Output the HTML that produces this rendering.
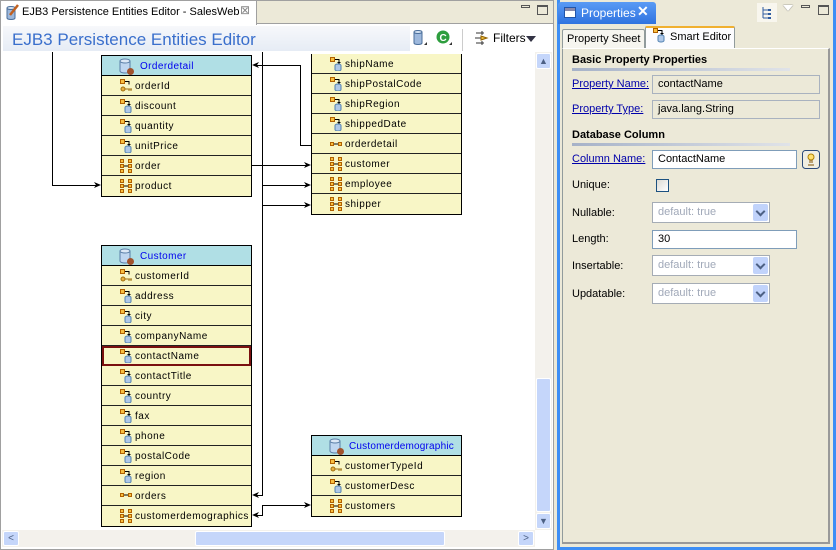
<!DOCTYPE html>
<html><head><meta charset="utf-8"><style>
*{margin:0;padding:0;box-sizing:border-box}
body{width:836px;height:550px;background:#ECE9D8;position:relative;overflow:hidden;font-family:"Liberation Sans",sans-serif;font-size:11px;color:#000}
.a{position:absolute}
.box{position:absolute;width:151px;border:1px solid #000;background:#F8F6C6}
.hd{height:20px;background:#B0DFE5;border-bottom:1px solid #000;position:relative;color:#0000EE;font-size:10px;letter-spacing:.4px;line-height:21px}
.r{height:20px;border-bottom:1px solid #222;position:relative;font-size:10px;letter-spacing:.5px;line-height:22px;padding-left:33px}
.r:last-child{border-bottom:0}
.ic{position:absolute;left:18px;top:3px;width:13px;height:14px}
.ent{position:absolute;left:16px;top:2px;width:17px;height:18px}
.lbl{position:absolute;font-size:11px}
.lnk{color:#0000AA;text-decoration:underline}
.fld{position:absolute;border:1px solid #7F9DB9;background:#fff;height:19px;line-height:17px;padding-left:5px;font-size:11px}
.combo{position:absolute;border:1px solid #A5ACB5;background:#fff;height:21px;line-height:19px;padding-left:5px;color:#A0A8B8;font-size:11px;width:118px}
.combo b{position:absolute;right:1px;top:1px;width:15px;height:17px;background:#C1D3FB;border-radius:2px}
.combo b:after{content:"";position:absolute;left:4px;top:4px;width:5px;height:5px;border-right:2px solid #4D6185;border-bottom:2px solid #4D6185;transform:rotate(45deg)}
.ln{position:absolute;background:#000}
</style></head><body>
<svg width="0" height="0" style="position:absolute"><defs>
<g id="col"><rect x="0.5" y="0.5" width="4" height="4" fill="#F8C040" stroke="#B06000"/><path d="M5 2.5h4v3" stroke="#000" fill="none"/><path d="M7 5l2 2l2-2" fill="#000"/><ellipse cx="8" cy="8.5" rx="3" ry="1.5" fill="#AFC8E8" stroke="#5080B0"/><path d="M5 8.5v4a3 1.5 0 0 0 6 0v-4" fill="#AFC8E8" stroke="#5080B0"/></g>
<g id="key"><rect x="0.5" y="0.5" width="4" height="4" fill="#F8C040" stroke="#B06000"/><path d="M5 2.5h4v3" stroke="#000" fill="none"/><circle cx="3" cy="10" r="2" fill="#E8B040" stroke="#A07010"/><path d="M5 10h7M9 10v2M11 10v2" stroke="#A07010"/></g>
<g id="rel"><rect x="0.5" y="4.5" width="3" height="3" fill="#F8C040" stroke="#B06000"/><path d="M4 6h4" stroke="#000"/><rect x="8.5" y="4.5" width="3" height="3" fill="#F8C040" stroke="#B06000"/></g>
<g id="rel2"><rect x="0.5" y="0.5" width="3" height="3" fill="#F8C040" stroke="#B06000"/><rect x="0.5" y="5.5" width="3" height="3" fill="#F8C040" stroke="#B06000"/><rect x="0.5" y="10.5" width="3" height="3" fill="#F8C040" stroke="#B06000"/><path d="M4 7h4" stroke="#000"/><rect x="8.5" y="0.5" width="3" height="3" fill="#F8C040" stroke="#B06000"/><rect x="8.5" y="5.5" width="3" height="3" fill="#F8C040" stroke="#B06000"/><rect x="8.5" y="10.5" width="3" height="3" fill="#F8C040" stroke="#B06000"/></g>
<g id="ent"><path d="M2 3v10a5 2 0 0 0 10 0v-10" fill="#BFD6F0" stroke="#5A7FA8"/><ellipse cx="7" cy="3" rx="5" ry="2" fill="#DDE9F7" stroke="#5A7FA8"/><circle cx="12.5" cy="13.5" r="3.5" fill="#A0522D"/></g>
</defs></svg>

<!-- LEFT EDITOR -->
<div class="a" style="left:0;top:0;width:554px;height:550px;border:1px solid #A0A0A0;background:#fff"></div>
<div class="a" style="left:1px;top:1px;width:552px;height:23px;background:#ECE9D8;border-bottom:1px solid #A0A0A0"></div>
<div class="a" style="left:1px;top:1px;width:256px;height:24px;background:#fff;border-right:1px solid #A0A0A0"></div>
<svg class="a" style="left:4px;top:4px" width="16" height="16"><path d="M3 4v10a4 1.5 0 0 0 8 0v-10" fill="#9DB8DC" stroke="#4A6E9A"/><ellipse cx="7" cy="4" rx="4" ry="1.5" fill="#D5E3F3" stroke="#4A6E9A"/><path d="M14 1l-8 10" stroke="#C06020" stroke-width="2.5"/></svg>
<div class="a" style="left:22px;top:6px;font-size:11px">EJB3 Persistence Entities Editor - SalesWeb</div>
<div class="a" style="left:240px;top:3px;font-size:12px;color:#888">⊠</div>
<div class="a" style="left:521px;top:5px;width:9px;height:3px;border:1px solid #555"></div>
<div class="a" style="left:537px;top:5px;width:11px;height:10px;border:1px solid #555;border-top-width:2px"></div>
<div class="a" style="left:3px;top:26px;width:407px;height:25px;background:linear-gradient(#F7F8FB,#E6ECF5)"></div>
<div class="a" style="left:12px;top:30px;font-size:17px;color:#3A6FCC">EJB3 Persistence Entities Editor</div>
<svg class="a" style="left:412px;top:29px" width="20" height="18"><path d="M2 3v11a4 1.5 0 0 0 8 0v-11" fill="#9DB8DC" stroke="#4A6E9A"/><ellipse cx="6" cy="3" rx="4" ry="1.5" fill="#D5E3F3" stroke="#4A6E9A"/><path d="M12 16l3-3v3z" fill="#333"/></svg>
<svg class="a" style="left:435px;top:29px" width="20" height="18"><circle cx="8" cy="8" r="6.5" fill="#2E9E3E"/><text x="4.5" y="12" font-size="10" font-weight="bold" fill="#fff" font-family="Liberation Sans">C</text><path d="M14 16l3-3v3z" fill="#333"/></svg>
<div class="a" style="left:462px;top:29px;width:1px;height:22px;background:#ccc"></div>
<svg class="a" style="left:473px;top:30px" width="18" height="16"><path d="M3 3h8M9 1v4M3 13h8M9 11v4M2 8h9" stroke="#333"/><path d="M8 6l6 2l-6 2z" fill="#F0C040" stroke="#906000"/></svg>
<div class="a" style="left:493px;top:31px;font-size:12px">Filters</div>
<div class="a" style="left:526px;top:36px;width:0;height:0;border-left:5px solid transparent;border-right:5px solid transparent;border-top:6px solid #334"></div>

<!-- lines -->
<div class="ln" style="left:52px;top:52px;width:1px;height:134px"></div>
<div class="ln" style="left:52px;top:185px;width:46px;height:1px"></div>
<div class="ln" style="left:262px;top:52px;width:1px;height:444px"></div>
<div class="ln" style="left:252px;top:165px;width:56px;height:1px"></div>
<div class="ln" style="left:262px;top:185px;width:46px;height:1px"></div>
<div class="ln" style="left:262px;top:205px;width:46px;height:1px"></div>
<div class="ln" style="left:300px;top:65px;width:1px;height:81px"></div>
<div class="ln" style="left:255px;top:65px;width:46px;height:1px"></div>
<div class="ln" style="left:300px;top:145px;width:11px;height:1px"></div>
<div class="ln" style="left:255px;top:495px;width:8px;height:1px"></div>
<div class="ln" style="left:262px;top:505px;width:46px;height:1px"></div>
<div class="ln" style="left:262px;top:505px;width:1px;height:11px"></div>
<div class="ln" style="left:255px;top:515px;width:8px;height:1px"></div>
<svg class="a" style="left:0;top:0" width="554" height="550">
<g fill="#000"><path d="M101 185l-7-3l2 3l-2 3z"/><path d="M311 165l-7-3l2 3l-2 3z"/><path d="M311 185l-7-3l2 3l-2 3z"/><path d="M311 205l-7-3l2 3l-2 3z"/><path d="M311 505l-7-3l2 3l-2 3z"/><path d="M252 65l7-3l-2 3l2 3z"/><path d="M252 495l7-3l-2 3l2 3z"/><path d="M252 515l7-3l-2 3l2 3z"/></g></svg>

<!-- Orderdetail -->
<div class="box" style="left:101px;top:55px">
<div class="hd"><svg class="ent"><use href="#ent"/></svg><span style="position:absolute;left:38px">Orderdetail</span></div>
<div class="r"><svg class="ic"><use href="#key"/></svg>orderId</div>
<div class="r"><svg class="ic"><use href="#col"/></svg>discount</div>
<div class="r"><svg class="ic"><use href="#col"/></svg>quantity</div>
<div class="r"><svg class="ic"><use href="#col"/></svg>unitPrice</div>
<div class="r"><svg class="ic"><use href="#rel2"/></svg>order</div>
<div class="r"><svg class="ic"><use href="#rel2"/></svg>product</div>
</div>

<!-- Orders (partial) -->
<div class="box" style="left:311px;top:54px;border-top:0">
<div class="r"><svg class="ic"><use href="#col"/></svg>shipName</div>
<div class="r"><svg class="ic"><use href="#col"/></svg>shipPostalCode</div>
<div class="r"><svg class="ic"><use href="#col"/></svg>shipRegion</div>
<div class="r"><svg class="ic"><use href="#col"/></svg>shippedDate</div>
<div class="r"><svg class="ic" style="top:4px"><use href="#rel"/></svg>orderdetail</div>
<div class="r"><svg class="ic"><use href="#rel2"/></svg>customer</div>
<div class="r"><svg class="ic"><use href="#rel2"/></svg>employee</div>
<div class="r"><svg class="ic"><use href="#rel2"/></svg>shipper</div>
</div>

<!-- Customer -->
<div class="box" style="left:101px;top:245px">
<div class="hd"><svg class="ent"><use href="#ent"/></svg><span style="position:absolute;left:38px">Customer</span></div>
<div class="r"><svg class="ic"><use href="#key"/></svg>customerId</div>
<div class="r"><svg class="ic"><use href="#col"/></svg>address</div>
<div class="r"><svg class="ic"><use href="#col"/></svg>city</div>
<div class="r"><svg class="ic"><use href="#col"/></svg>companyName</div>
<div class="r" style="outline:2px solid #7A1010;outline-offset:-2px"><svg class="ic"><use href="#col"/></svg>contactName</div>
<div class="r"><svg class="ic"><use href="#col"/></svg>contactTitle</div>
<div class="r"><svg class="ic"><use href="#col"/></svg>country</div>
<div class="r"><svg class="ic"><use href="#col"/></svg>fax</div>
<div class="r"><svg class="ic"><use href="#col"/></svg>phone</div>
<div class="r"><svg class="ic"><use href="#col"/></svg>postalCode</div>
<div class="r"><svg class="ic"><use href="#col"/></svg>region</div>
<div class="r"><svg class="ic"><use href="#rel"/></svg>orders</div>
<div class="r"><svg class="ic"><use href="#rel2"/></svg>customerdemographics</div>
</div>

<!-- Customerdemographic -->
<div class="box" style="left:311px;top:435px">
<div class="hd"><svg class="ent"><use href="#ent"/></svg><span style="position:absolute;left:37px;letter-spacing:.2px">Customerdemographic</span></div>
<div class="r"><svg class="ic"><use href="#key"/></svg>customerTypeId</div>
<div class="r"><svg class="ic"><use href="#col"/></svg>customerDesc</div>
<div class="r"><svg class="ic"><use href="#rel2"/></svg>customers</div>
</div>

<!-- scrollbars -->
<div class="a" style="left:535px;top:52px;width:17px;height:478px;background:#F3F1EC"></div>
<div class="a" style="left:536px;top:53px;width:15px;height:16px;background:#C5D6FA;border:1px solid #fff;border-radius:2px;color:#4D6185;font-size:9px;text-align:center;line-height:14px">▲</div>
<div class="a" style="left:536px;top:378px;width:15px;height:134px;background:#C5D6FA;border:1px solid #fff;border-radius:2px"></div>
<div class="a" style="left:536px;top:513px;width:15px;height:16px;background:#C5D6FA;border:1px solid #fff;border-radius:2px;color:#4D6185;font-size:9px;text-align:center;line-height:14px">▼</div>
<div class="a" style="left:2px;top:530px;width:533px;height:17px;background:#F3F1EC"></div>
<div class="a" style="left:3px;top:531px;width:16px;height:15px;background:#C5D6FA;border:1px solid #fff;border-radius:2px;color:#4D6185;font-size:10px;text-align:center;line-height:13px">&lt;</div>
<div class="a" style="left:195px;top:531px;width:250px;height:15px;background:#C5D6FA;border:1px solid #fff;border-radius:2px"></div>
<div class="a" style="left:518px;top:531px;width:16px;height:15px;background:#C5D6FA;border:1px solid #fff;border-radius:2px;color:#4D6185;font-size:10px;text-align:center;line-height:13px">&gt;</div>

<!-- RIGHT PANEL -->
<div class="a" style="left:557px;top:0;width:279px;height:550px;border:3px solid #3D8EF5;border-top:0;background:#ECE9D8"></div>
<div class="a" style="left:558px;top:2px;width:98px;height:22px;background:linear-gradient(#5A9BF5,#2F73E0);border-radius:3px 3px 0 0"></div>
<div class="a" style="left:564px;top:7px;width:12px;height:11px;background:#fff;border:1px solid #2255AA;box-shadow:inset 0 3px 0 #88A"></div>
<div class="a" style="left:581px;top:6px;color:#fff;font-size:12px">Properties</div>
<div class="a" style="left:637px;top:3px;color:#fff;font-size:14px;font-weight:bold">✕</div>
<div class="a" style="left:757px;top:3px;width:20px;height:19px;background:#F8F6EE"></div>
<svg class="a" style="left:761px;top:6px" width="12" height="14"><path d="M2 1v11M2 4h5M2 8h5M2 12h5" stroke="#2F5CA0" fill="none"/><rect x="7" y="3" width="3" height="2" fill="#2F5CA0"/><rect x="7" y="7" width="3" height="2" fill="#2F5CA0"/><rect x="7" y="11" width="3" height="2" fill="#2F5CA0"/></svg>
<div class="a" style="left:783px;top:5px;width:0;height:0;border-left:5px solid transparent;border-right:5px solid transparent;border-top:6px solid #fff;filter:drop-shadow(0 0 0.6px #555)"></div>
<div class="a" style="left:801px;top:5px;width:9px;height:3px;border:1px solid #555"></div>
<div class="a" style="left:818px;top:5px;width:11px;height:10px;border:1px solid #555;border-top-width:2px"></div>

<div class="a" style="left:562px;top:29px;width:83px;height:20px;border:1px solid #919B9C;border-bottom:0;background:#F6F5EF;border-radius:2px 2px 0 0"></div>
<div class="a" style="left:567px;top:33px;font-size:11px">Property Sheet</div>
<div class="a" style="left:645px;top:26px;width:90px;height:23px;border:1px solid #919B9C;border-top:2px solid #F0B030;border-bottom:0;background:#FCFCFE;border-radius:2px 2px 0 0"></div>
<svg class="a" style="left:653px;top:28px" width="14" height="16"><use href="#col"/></svg>
<div class="a" style="left:670px;top:31px;font-size:11px">Smart Editor</div>
<div class="a" style="left:562px;top:48px;width:268px;height:496px;border:1px solid #919B9C;border-top-color:#fff;border-right:2px solid #999;border-bottom:2px solid #999;background:#ECE9D8"></div>

<div class="a" style="left:572px;top:54px;font-weight:bold;font-size:11px">Basic Property Properties</div>
<div class="a" style="left:572px;top:68px;width:218px;height:3px;background:linear-gradient(90deg,#A6B2C8,#E0E3E8)"></div>
<div class="lbl lnk" style="left:572px;top:78px">Property Name:</div>
<div class="fld" style="left:652px;top:75px;width:168px;background:#ECE9D8;border-color:#A9B2BF">contactName</div>
<div class="lbl lnk" style="left:572px;top:103px">Property Type:</div>
<div class="fld" style="left:652px;top:100px;width:168px;background:#ECE9D8;border-color:#A9B2BF">java.lang.String</div>
<div class="a" style="left:572px;top:129px;font-weight:bold;font-size:11px">Database Column</div>
<div class="a" style="left:572px;top:143px;width:218px;height:3px;background:linear-gradient(90deg,#A6B2C8,#E0E3E8)"></div>
<div class="lbl lnk" style="left:572px;top:153px">Column Name:</div>
<div class="fld" style="left:652px;top:150px;width:145px">ContactName</div>
<svg class="a" style="left:802px;top:150px" width="18" height="19"><rect x="0.5" y="0.5" width="17" height="18" rx="3" fill="#F0EEE2" stroke="#2B4A7A"/><circle cx="9" cy="7" r="3" fill="#FFE070" stroke="#B08000"/><path d="M8 10v3M10 10v3M6 15h6" stroke="#805000"/></svg>
<div class="lbl" style="left:572px;top:179px">Unique:</div>
<div class="a" style="left:656px;top:179px;width:13px;height:13px;border:1px solid #1C5180;background:linear-gradient(135deg,#DCDBD5,#fff)"></div>
<div class="lbl" style="left:572px;top:207px">Nullable:</div>
<div class="combo" style="left:652px;top:202px">default: true<b></b></div>
<div class="lbl" style="left:572px;top:233px">Length:</div>
<div class="fld" style="left:652px;top:230px;width:145px">30</div>
<div class="lbl" style="left:572px;top:260px">Insertable:</div>
<div class="combo" style="left:652px;top:255px">default: true<b></b></div>
<div class="lbl" style="left:572px;top:288px">Updatable:</div>
<div class="combo" style="left:652px;top:283px">default: true<b></b></div>
</body></html>
